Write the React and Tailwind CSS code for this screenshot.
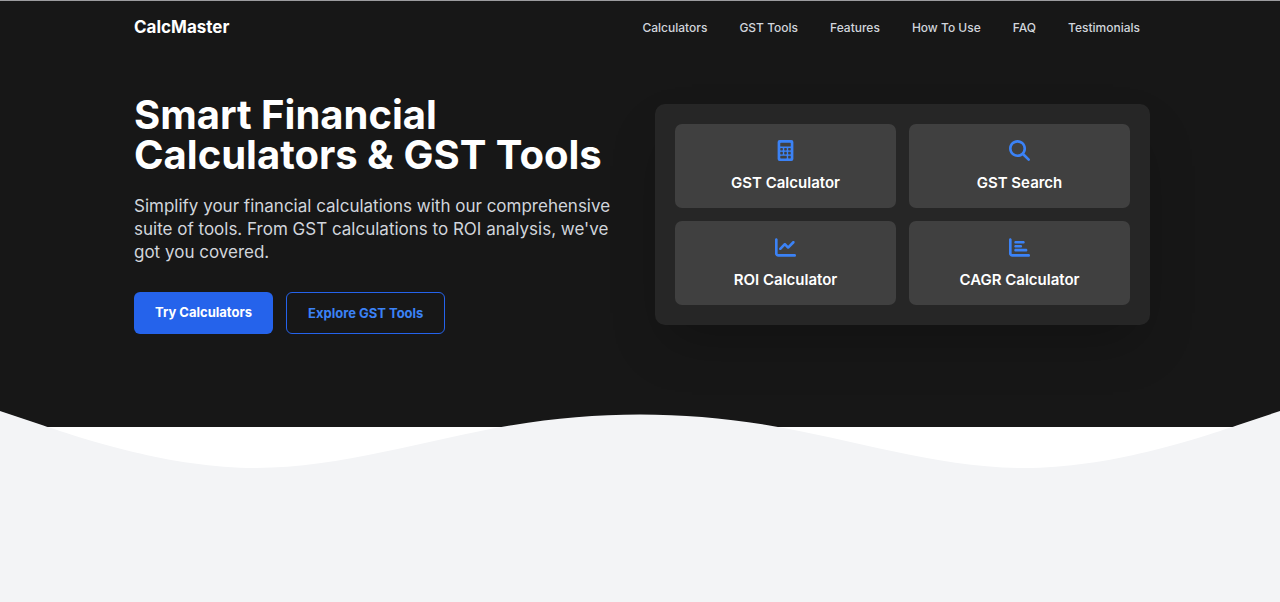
import { FaChartBar, FaChartLine, FaMagnifyingGlass } from "react-icons/fa6";

// solid calculator with square keys
const CalculatorIcon = ({ className }) => (
  <svg viewBox="0 0 384 512" fill="currentColor" className={className} aria-hidden="true">
    <path
      fillRule="evenodd"
      d="M48 0h288a48 48 0 0 1 48 48v416a48 48 0 0 1-48 48H48a48 48 0 0 1-48-48V48A48 48 0 0 1 48 0z
      M80 64a16 16 0 0 0-16 16v64a16 16 0 0 0 16 16h224a16 16 0 0 0 16-16V80a16 16 0 0 0-16-16z
      M80 192a16 16 0 0 0-16 16v32a16 16 0 0 0 16 16h32a16 16 0 0 0 16-16v-32a16 16 0 0 0-16-16z
      M176 192a16 16 0 0 0-16 16v32a16 16 0 0 0 16 16h32a16 16 0 0 0 16-16v-32a16 16 0 0 0-16-16z
      M272 192a16 16 0 0 0-16 16v32a16 16 0 0 0 16 16h32a16 16 0 0 0 16-16v-32a16 16 0 0 0-16-16z
      M80 288a16 16 0 0 0-16 16v32a16 16 0 0 0 16 16h32a16 16 0 0 0 16-16v-32a16 16 0 0 0-16-16z
      M176 288a16 16 0 0 0-16 16v32a16 16 0 0 0 16 16h32a16 16 0 0 0 16-16v-32a16 16 0 0 0-16-16z
      M272 288a16 16 0 0 0-16 16v32a16 16 0 0 0 16 16h32a16 16 0 0 0 16-16v-32a16 16 0 0 0-16-16z
      M80 384a16 16 0 0 0-16 16v32a16 16 0 0 0 16 16h128a16 16 0 0 0 16-16v-32a16 16 0 0 0-16-16z
      M272 384a16 16 0 0 0-16 16v32a16 16 0 0 0 16 16h32a16 16 0 0 0 16-16v-32a16 16 0 0 0-16-16z"
    />
  </svg>
);

const navLinks = [
  { label: "Calculators", href: "#calculators" },
  { label: "GST Tools", href: "#gst-tools" },
  { label: "Features", href: "#features" },
  { label: "How To Use", href: "#how-to-use" },
  { label: "FAQ", href: "#faq" },
  { label: "Testimonials", href: "#testimonials" },
];

const tools = [
  { label: "GST Calculator", href: "#gst-calculator", icon: CalculatorIcon },
  { label: "GST Search", href: "#gst-search", icon: FaMagnifyingGlass },
  { label: "ROI Calculator", href: "#roi-calculator", icon: FaChartLine },
  { label: "CAGR Calculator", href: "#cagr-calculator", icon: FaChartBar },
];

const Navbar = () => (
  <header className="border-t border-[#9c9c9f]">
    <div className="mx-auto flex h-[54px] max-w-[1020px] items-center justify-between pl-1">
      <a href="#" className="text-[17px] font-bold text-white">
        CalcMaster
      </a>
      <nav className="flex gap-3">
        {navLinks.map((link) => (
          <a
            key={link.label}
            href={link.href}
            className="px-[10px] text-xs font-medium text-gray-300 hover:text-white"
          >
            {link.label}
          </a>
        ))}
      </nav>
    </div>
  </header>
);

const ToolCard = ({ label, href, icon: Icon }) => (
  <a
    href={href}
    className="flex flex-col items-center gap-2 rounded-[7px] bg-[#404040] px-3 pt-4 pb-[11px] hover:bg-neutral-600"
  >
    <Icon className="size-[21px] text-[#3b82f6]" />
    <h3 className="text-[15px] leading-7 font-semibold text-white">{label}</h3>
  </a>
);

const Hero = () => (
  <section className="mx-auto grid max-w-[1020px] items-center gap-[26px] pt-10 pb-[93px] pl-1 md:grid-cols-2">
    <div>
      <h1 className="text-[40px] leading-10 font-bold text-white">
        Smart Financial Calculators & GST Tools
      </h1>
      <p className="mt-5 text-[17px] leading-[23px] text-gray-300">
        Simplify your financial calculations with our comprehensive suite of
        tools. From GST calculations to ROI analysis, we've got you covered.
      </p>
      <div className="mt-7 flex gap-[13px]">
        <button
          type="button"
          className="rounded-md bg-[#2563eb] px-[21px] pt-2.5 pb-3 text-[13px] leading-5 font-bold text-white hover:bg-blue-700"
        >
          Try Calculators
        </button>
        <button
          type="button"
          className="rounded-md border border-[#2563eb] px-[21px] py-2.5 text-[13px] leading-5 font-bold text-[#3b82f6] hover:bg-blue-600 hover:text-white"
        >
          Explore GST Tools
        </button>
      </div>
    </div>

    <div className="grid grid-cols-2 gap-[13px] rounded-[10px] bg-neutral-800 p-5 shadow-2xl">
      {tools.map((tool) => (
        <ToolCard key={tool.label} {...tool} />
      ))}
    </div>
  </section>
);

const Wave = () => (
  <div className="flex bg-white">
    <svg
      viewBox="0 96 1440 64"
      preserveAspectRatio="none"
      className="pointer-events-none relative -mt-4 h-[57px] w-full"
      aria-hidden="true"
    >
      <path
        className="fill-gray-100"
        d="M0,96L48,112C96,128,192,160,288,160C384,160,480,128,576,112C672,96,768,96,864,112C960,128,1056,160,1152,160C1248,160,1344,128,1392,112L1440,96L1440,160L0,160Z"
      />
    </svg>
  </div>
);

const App = () => {
  return (
    <div className="flex min-h-screen flex-col bg-gray-100 font-['Inter',sans-serif]">
      <div className="bg-neutral-900">
        <Navbar />
        <Hero />
      </div>
      <Wave />
    </div>
  );
};

export default App;
